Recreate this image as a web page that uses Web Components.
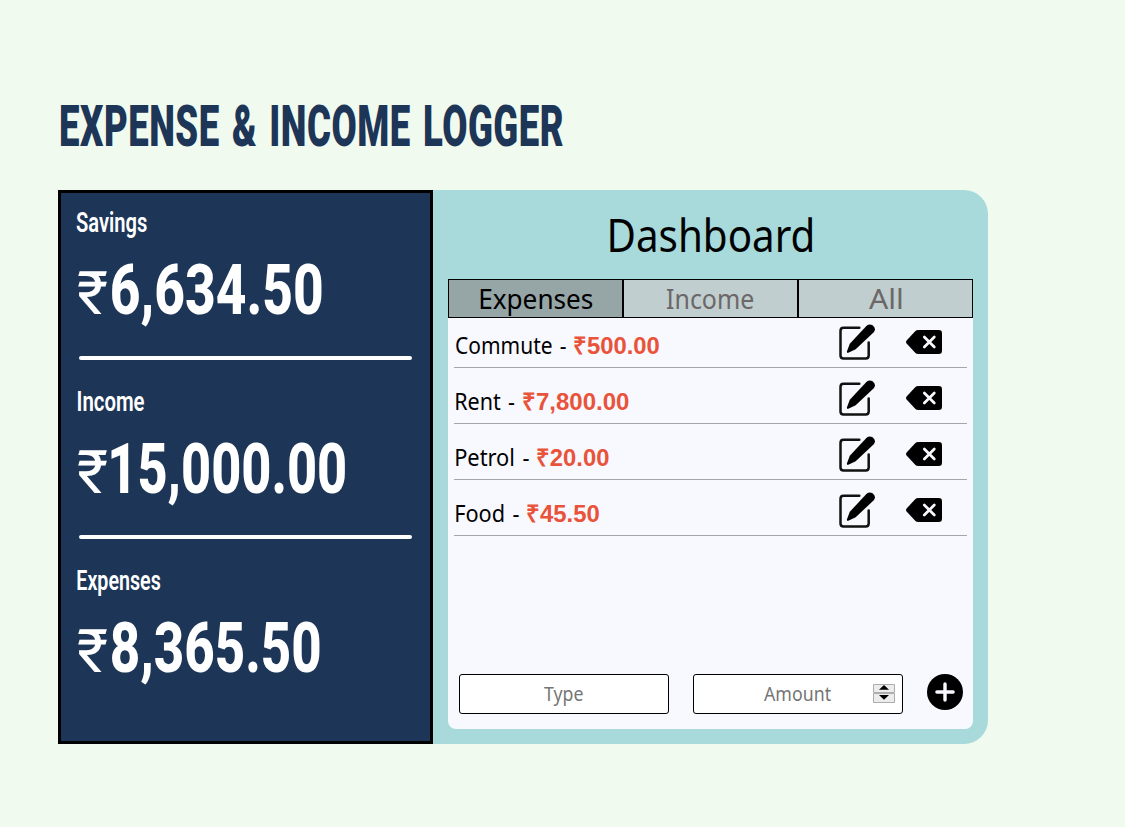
<!DOCTYPE html>
<html lang="en">
<head>
<meta charset="utf-8">
<title>Expense &amp; Income Logger</title>
<style>
html,body{margin:0;background:#f1faee;font-family:"Noto Sans",sans-serif;color:#000}
body{height:827px;overflow:hidden}
</style>
</head>
<body>
<logger-app></logger-app>
<script>
// One line of text, set to an exact ink width; the host box runs from cap height to baseline.
class FitText extends HTMLElement{
  connectedCallback(){
    const a=(n,d)=>this.getAttribute(n)||d;
    const size=+a('size',24),cap=+a('cap',17),w=+a('w',100),weight=a('weight','400'),face=a('face','Noto Sans');
    const ls=+a('ls',0),ws=+a('ws',0);
    const text=this.textContent;
    const c=document.createElement('canvas').getContext('2d');
    c.font=`${weight} ${size}px "${face}", sans-serif`;
    const m=c.measureText(text);
    const extra=ls*(text.length-1)+ws*(text.split(' ').length-1);
    const s=w/(m.actualBoundingBoxRight+m.actualBoundingBoxLeft+extra);
    const dx=m.actualBoundingBoxLeft*s;
    const dy=cap/2-(Math.round(m.fontBoundingBoxAscent)-Math.round(m.fontBoundingBoxDescent))/2;
    this.attachShadow({mode:'open'}).innerHTML=`<style>
      :host{display:block;flex:none;width:${w}px;height:${cap}px}
      span{display:block;width:max-content;white-space:pre;font:${weight} ${size}px/${cap}px "${face}",sans-serif;letter-spacing:${ls}px;word-spacing:${ws}px;transform-origin:0 0;transform:translate(${dx}px,${dy}px) scaleX(${s})}
      </style><span><slot></slot></span>`;
  }
}
customElements.define('fit-text',FitText);

class StatCard extends HTMLElement{
  connectedCallback(){
    const g=n=>this.getAttribute(n);
    this.attachShadow({mode:'open'}).innerHTML=`<style>
      :host{display:block;color:#fff;height:179px;box-sizing:border-box;padding-top:19px}
      .label{padding-left:${g('inset')}px}
      .sum{display:flex;align-items:flex-end;height:50px;margin:32px 0 0 17px}
      .num{margin-left:${g('gap')}px}
      .rule{height:4px;border-radius:2px;background:#fff;margin:42px 18px 0}
      :host([last]) .rule{display:none}
      </style>
      <div class="label"><fit-text face="Roboto" weight="600" size="28" cap="20" w="${g('lw')}">${g('label')}</fit-text></div>
      <div class="sum"><fit-text face="Roboto" weight="400" size="60" cap="43" w="29">₹</fit-text><fit-text class="num" face="Roboto" weight="800" size="70" cap="50" w="${g('nw')}">${g('value')}</fit-text></div>
      <div class="rule"></div>`;
  }
}
customElements.define('stat-card',StatCard);

class TabItem extends HTMLElement{
  connectedCallback(){
    this.attachShadow({mode:'open'}).innerHTML=`<style>
      :host{display:flex;flex:none;width:175px;justify-content:center;box-sizing:border-box;height:39px;padding-top:9px;border:1px solid #000;background:#c0cecf;color:#6c6768}
      :host([active]){padding-left:1px;background:#96a5a6;color:#000}
      </style><slot></slot>`;
  }
}
customElements.define('tab-item',TabItem);

class LogRow extends HTMLElement{
  connectedCallback(){
    const g=n=>this.getAttribute(n);
    this.attachShadow({mode:'open'}).innerHTML=`<style>
      :host{display:flex;align-items:flex-end;box-sizing:border-box;height:56px;margin:0 6px;border-bottom:1px solid #a5a5aa}
      :host([first]){height:50px}
      .name{margin:0 0 13px 1.500px}
      .amt{margin:0 0 13px 8.500px;color:#e8533a}
      .edit{margin:0 0 7px auto}
      .del{margin:0 25px 13px 31px}
      svg{display:block;flex:none}
      </style>
      <fit-text class="name" size="23.5" cap="17" ws="2" w="${g('nw')}">${g('name')} -</fit-text>
      <fit-text class="amt" face="Liberation Sans" weight="700" size="24" cap="17" w="${g('aw')}">${g('amount')}</fit-text>
      <svg class="edit" width="36" height="36" viewBox="0 0 36 36"><path d="M20.300 3.700H4.500Q1.500 3.700 1.500 6.700v24.800q0 3 3 3h22.200q3 0 3-3V18.500" fill="none" stroke="#111" stroke-width="2.500" stroke-linecap="round"/><path d="M7.900 27.600 10.800 19.800 27.600 1.800Q30.300-.7 33.600 1.200 37.400 4.300 35 8L16.700 25.200 9.300 28.700Q7.700 29 7.900 27.600Z"/></svg>
      <svg class="del" width="36" height="24" viewBox="0 0 36 24"><path d="M.6 10.500 9.200 1.300Q10.500 0 12.300 0H32.700Q36 0 36 3.300V20.700Q36 24 32.700 24H12.300Q10.500 24 9.200 22.700L.6 13.500Q-.5 12 .6 10.500Z"/><path d="m18.300 7 10 10m0-10-10 10" stroke="#f8f8ff" stroke-width="2.700" stroke-linecap="round"/></svg>`;
  }
}
customElements.define('log-row',LogRow);

class EntryForm extends HTMLElement{
  connectedCallback(){
    this.attachShadow({mode:'open'}).innerHTML=`<style>
      :host{display:flex;gap:24px;padding:0 10px 0 11px;margin-top:auto;margin-bottom:15px;color:#757575}
      .field{display:flex;box-sizing:border-box;width:210px;height:40px;border:1px solid #000;border-radius:3px;background:#fff}
      .field fit-text{margin-top:12px}
      .type{padding-left:84px}.amount{padding-left:70px}
      .spin{margin:9px 7px 0 auto}
      svg{display:block;flex:none}
      </style>
      <div class="field type"><fit-text size="19.500" cap="14" w="38.500">Type</fit-text></div>
      <div class="field amount"><fit-text size="19.500" cap="14" w="67">Amount</fit-text>
      <svg class="spin" width="22" height="19" viewBox="0 0 22 19"><path d="M.5.5h21v8H.5zM.5 9.500h21v9H.5z" fill="#ececec" stroke="#adadad"/><path d="M11 1 16 5.700H6zM11 15.700 16 11H6z"/></svg></div>
      <svg width="36" height="36" viewBox="0 0 36 36"><circle cx="18" cy="18" r="18"/><path d="M9.900 18h16.200M18 9.900v16.200" stroke="#f8f8ff" stroke-width="3.400" stroke-linecap="round"/></svg>`;
  }
}
customElements.define('entry-form',EntryForm);

class LoggerApp extends HTMLElement{
  connectedCallback(){
    this.attachShadow({mode:'open'}).innerHTML=`<style>
      :host{display:block;box-sizing:border-box;padding:106px 0 0 58px}
      header{padding-left:3px;color:#1d3557}
      main{display:flex;width:930px;height:554px;margin-top:44px}
      aside{box-sizing:border-box;width:375px;border:3px solid #000;background:#1d3557}
      section{box-sizing:border-box;display:flex;flex-direction:column;width:555px;padding:29px 15px 15px;background:#a8dadc;border-radius:0 24px 24px 0}
      .title{display:flex;padding-left:161.500px}
      nav{display:flex;margin-top:27px}
      .list{display:flex;flex-direction:column;flex:1;background:#f8f8ff;border-radius:0 0 8px 8px}
      </style>
      <header><fit-text face="Roboto" weight="900" size="56.500" cap="40" ls=".8" ws="4" w="502">EXPENSE &amp; INCOME LOGGER</fit-text></header>
      <main>
        <aside>
          <stat-card label="Savings" lw="71" inset="15" value="6,634.50" gap="4.500" nw="210"></stat-card>
          <stat-card label="Income" lw="66.500" inset="16.500" value="15,000.00" gap="3.500" nw="234.500"></stat-card>
          <stat-card last label="Expenses" lw="83.500" inset="16" value="8,365.50" gap="4.500" nw="208"></stat-card>
        </aside>
        <section>
          <div class="title"><fit-text size="46" cap="33" w="202.500">Dashboard</fit-text></div>
          <nav>
            <tab-item active><fit-text size="28" cap="20" w="113">Expenses</fit-text></tab-item>
            <tab-item><fit-text size="28" cap="20" w="86.500">Income</fit-text></tab-item>
            <tab-item><fit-text size="28" cap="20" w="32.500">All</fit-text></tab-item>
          </nav>
          <div class="list">
            <log-row first name="Commute" nw="110" amount="₹500.00" aw="85.500"></log-row>
            <log-row name="Rent" nw="58.500" amount="₹7,800.00" aw="106"></log-row>
            <log-row name="Petrol" nw="73" amount="₹20.00" aw="72"></log-row>
            <log-row name="Food" nw="63" amount="₹45.50" aw="72.500"></log-row>
            <entry-form></entry-form>
          </div>
        </section>
      </main>`;
  }
}
customElements.define('logger-app',LoggerApp);
</script>
</body>
</html>
